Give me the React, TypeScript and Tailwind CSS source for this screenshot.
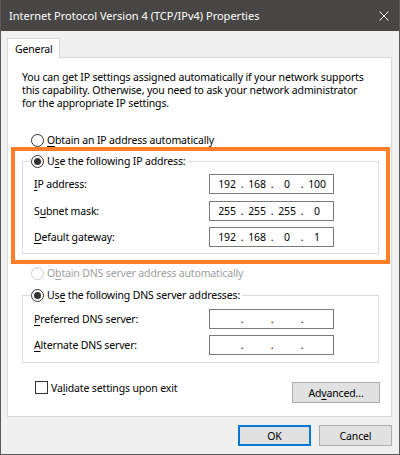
import { Fragment } from "react";

const font = { fontFamily: '"Noto Sans", "Liberation Sans", sans-serif' };

function Radio({ checked, disabled }: { checked?: boolean; disabled?: boolean }) {
  return (
    <span
      className={`flex h-[13px] w-[13px] shrink-0 items-center justify-center rounded-full border bg-white ${
        disabled ? "border-[#cccccc]" : "border-[#333333]"
      }`}
    >
      {checked && <span className="h-[7px] w-[7px] rounded-full bg-[#333333]" />}
    </span>
  );
}

function IpBox({ parts }: { parts: string[] }) {
  return (
    <div className="flex h-[20px] w-[125px] items-center border border-[#7a7a7a] bg-white pl-[4px]">
      {parts.map((p, i) => (
        <Fragment key={i}>
          <span className="w-[26px] text-center">{p}</span>
          {i < 3 && <span className="w-[4px] text-center">.</span>}
        </Fragment>
      ))}
    </div>
  );
}

function Field({ label, parts, className = "" }: { label: React.ReactNode; parts: string[]; className?: string }) {
  return (
    <div className={`flex items-center pl-[11px] ${className}`}>
      <span className="w-[175px]">{label}</span>
      <IpBox parts={parts} />
    </div>
  );
}

const U = ({ children }: { children: React.ReactNode }) => (
  <span className="underline underline-offset-[2px]">{children}</span>
);

export default function App() {
  return (
    <div
      className="flex h-[455px] w-[400px] flex-col overflow-hidden border-x border-b border-[#5a5a5a] bg-[#f0f0f0] text-[10.5px] leading-[14px] tracking-[-0.15px] whitespace-nowrap text-black"
      style={font}
    >
      {/* title bar */}
      <div className="-mx-px flex h-[31px] shrink-0 items-center justify-between bg-[#484644] pl-[9px] pr-[10px] text-[11px] tracking-normal text-white">
        <span>Internet Protocol Version 4 (TCP/IPv4) Properties</span>
        <svg width="10" height="10" viewBox="0 0 10 10" className="mr-[1px]">
          <path d="M0.5 0.5 L9.5 9.5 M9.5 0.5 L0.5 9.5" stroke="#ffffff" strokeWidth="1" />
        </svg>
      </div>

      <div className="flex flex-col pt-[7px] pl-[6px]">
        {/* tab */}
        <div className="relative z-10 -mb-px flex h-[20px] w-[53px] items-center border-x border-t border-[#d9d9d9] bg-white pl-[7px]">
          General
        </div>

        {/* panel */}
        <div className="relative flex w-[385px] flex-col border border-[#d9d9d9] bg-white pt-[13px] pr-[11px] pb-[13px] pl-[14px]">
          <p className="leading-[13px]">
            You can get IP settings assigned automatically if your network supports
            <br />
            this capability. Otherwise, you need to ask your network administrator
            <br />
            for the appropriate IP settings.
          </p>

          <div className="mt-[23px] flex h-[14px] items-center gap-[3px] pl-[9px]">
            <Radio />
            <span>
              <U>O</U>btain an IP address automatically
            </span>
          </div>

          <fieldset className="mt-[7px] w-[357px] border border-[#dcdcdc] pb-[6px]">
            <legend className="ml-[8px] flex h-[14px] items-center gap-[3px] pr-[2px]">
              <Radio checked />
              <span>
                U<U>s</U>e the following IP address:
              </span>
            </legend>
            <Field className="mt-[6px]" label={<><U>I</U>P address:</>} parts={["192", "168", "0", "100"]} />
            <Field className="mt-[7px]" label={<>S<U>u</U>bnet mask:</>} parts={["255", "255", "255", "0"]} />
            <Field className="mt-[6px]" label={<><U>D</U>efault gateway:</>} parts={["192", "168", "0", "1"]} />
          </fieldset>

          <div className="mt-[12px] flex h-[14px] items-center gap-[3px] pl-[9px] text-[#a0a0a0]">
            <Radio disabled />
            <span>
              O<U>b</U>tain DNS server address automatically
            </span>
          </div>

          <fieldset className="mt-[8px] w-[357px] border border-[#dcdcdc] pb-[7px]">
            <legend className="ml-[8px] flex h-[14px] items-center gap-[3px] pr-[2px]">
              <Radio checked />
              <span>
                Us<U>e</U> the following DNS server addresses:
              </span>
            </legend>
            <Field className="mt-[7px]" label={<><U>P</U>referred DNS server:</>} parts={["", "", "", ""]} />
            <Field className="mt-[6px]" label={<><U>A</U>lternate DNS server:</>} parts={["", "", "", ""]} />
          </fieldset>

          <div className="mt-[18px] flex items-start justify-between">
            <div className="ml-[13px] flex h-[13px] items-center gap-[3px]">
              <span className="h-[13px] w-[13px] border border-[#333333] bg-white" />
              <span>
                Va<U>l</U>idate settings upon exit
              </span>
            </div>
            <button className="mt-px flex h-[21px] w-[88px] items-center justify-center border border-[#adadad] bg-[#e1e1e1]">
              Ad<U>v</U>anced...
            </button>
          </div>

          {/* highlight annotation */}
          <div className="pointer-events-none absolute top-[89px] left-[3px] h-[117px] w-[379px] border-[4px] border-[#ff7f27]" />
        </div>

        {/* dialog buttons */}
        <div className="mt-[8px] flex w-[385px] justify-end gap-[8px]">
          <button className="flex h-[21px] w-[73px] items-center justify-center border-2 border-[#0078d7] bg-[#e1e1e1]">
            OK
          </button>
          <button className="flex h-[21px] w-[73px] items-center justify-center border border-[#adadad] bg-[#e1e1e1]">
            Cancel
          </button>
        </div>
      </div>
    </div>
  );
}
